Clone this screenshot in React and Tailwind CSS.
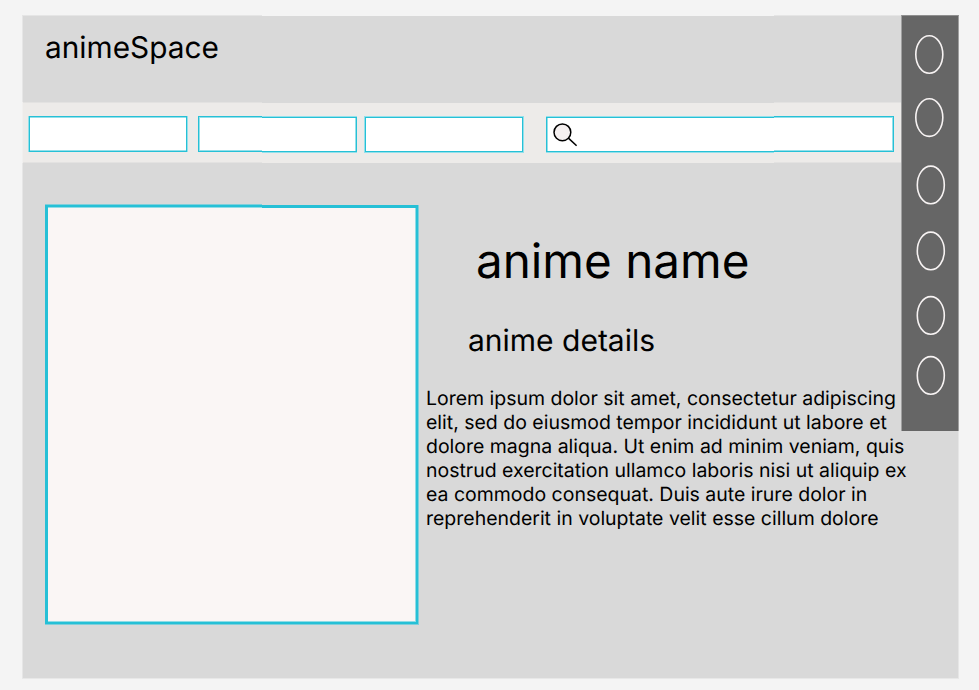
const circles = [
  { cx: 28.3, cy: 39.5 },
  { cx: 28.3, cy: 102.6 },
  { cx: 29.8, cy: 169.9 },
  { cx: 29.8, cy: 235.9 },
  { cx: 29.8, cy: 300.4 },
  { cx: 29.8, cy: 360.4 },
];

function SideRail() {
  return (
    <aside className="col-start-1 row-start-1 h-[416px] w-[58px] justify-self-end border-x border-t border-[#a0a0a0] border-t-[#8f8f8f] bg-[#666666]">
      <svg className="-ml-px -mt-px h-[416px] w-[58px]" viewBox="0 0 58 416" fill="none">
        {circles.map((c) => (
          <ellipse key={c.cy} cx={c.cx} cy={c.cy} rx="13.5" ry="18.8" stroke="#f7f3f3" strokeWidth="1.6" />
        ))}
      </svg>
    </aside>
  );
}

function SearchIcon() {
  return (
    <svg className="h-[26px] w-[26px]" viewBox="0 0 26 26" fill="none">
      <circle cx="9.4" cy="9.3" r="8.4" fill="#f5f0f0" stroke="#000" strokeWidth="1.5" />
      <path d="M15.4 15.1L23.6 22.7" stroke="#000" strokeWidth="1.5" />
    </svg>
  );
}

function Toolbar() {
  return (
    <div className="flex h-[61px] border-l border-l-[#f1f0ef] bg-[#edebe9]">
      <div className="flex w-[239px] border-y border-t-[#e3e2e1] border-b-[#e3e2e1]">
        <div className="ml-[5px] mt-[13px] h-9 w-40 border-x border-l-[#93e0ea] border-r-[#93e0ea]">
          <div className="h-9 border border-[#26c0d6]">
            <div className="h-[34px] border-y border-[#93e0ea] bg-white" />
          </div>
        </div>
        <div className="ml-[10px] mt-[13px] h-9 w-16 border-y border-l border-[#26c0d6]">
          <div className="h-[34px] border-y border-l border-[#93e0ea] bg-white" />
        </div>
      </div>
      <div className="flex w-[512px] border-t border-[#d9d9d9]">
        <div className="mt-[13px] h-[37px] w-[95px] border-y border-[#93e0ea]">
          <div className="h-[35px] border-y border-r border-[#26c0d6] bg-white">
            <div className="h-[33px] border-r border-[#93e0ea]" />
          </div>
        </div>
        <div className="ml-[7px] mt-[13px] h-[37px] w-40 border border-[#93e0ea]">
          <div className="h-[35px] border border-[#26c0d6] bg-white" />
        </div>
        <div className="ml-[22px] mt-[13px] h-[37px] w-[228px] border-y border-[#93e0ea]">
          <div className="h-[35px] border-y border-l border-[#26c0d6] bg-white">
            <div className="h-[33px] border-l border-[#93e0ea] pl-[5px] pt-[5px]">
              <SearchIcon />
            </div>
          </div>
        </div>
      </div>
      <div className="w-[127px] border-y border-[#e3e2e1]">
        <div className="mt-[13px] h-9 w-[120px] border-y border-r border-[#26c0d6]">
          <div className="h-[34px] border-y border-r border-[#93e0ea] bg-white" />
        </div>
      </div>
    </div>
  );
}

function Poster() {
  return (
    <div className="flex h-[421px] w-[374px] shrink-0">
      <div className="w-[217px] border-y border-[#7fcfdb]">
        <div className="h-[419px] border-b-2 border-l-[3px] border-t-2 border-[#26c0d6]">
          <div className="h-[415px] border-y border-[#90dce6] bg-[#faf6f5]" />
        </div>
      </div>
      <div className="mt-px h-[420px] w-[157px] border-b border-r border-[#7fcfdb]">
        <div className="h-[419px] border-b-2 border-r-2 border-t-[3px] border-[#26c0d6]">
          <div className="h-[414px] border-b border-r border-[#90dce6] bg-[#faf6f5]" />
        </div>
      </div>
    </div>
  );
}

export default function App() {
  return (
    <div className="h-[690px] w-[979px] overflow-hidden bg-[#f4f4f4] pl-[22px] pt-[15px] font-['Inter',sans-serif] text-black [text-rendering:geometricPrecision]">
      <div className="grid h-[664px] w-[937px]">
        <main className="col-start-1 row-start-1 bg-[#d9d9d9]">
          <div className="flex h-px">
            <div className="w-[240px] bg-[#e5e5e5]" />
            <div className="w-[512px] bg-[#f4f4f4]" />
            <div className="grow bg-[#e5e5e5]" />
          </div>
          <div className="h-[662px] border-x border-[#e6e6e6]">
            <header className="h-[86px] pl-[22px] pt-[13px]">
              <h1 className="whitespace-nowrap text-[29.8px] leading-[38px]">animeSpace</h1>
            </header>
            <div className="-ml-px w-[879px]">
              <Toolbar />
            </div>
            <section className="flex pl-[22px] pt-[41px]">
              <Poster />
              <div className="ml-[7px] w-[490px] whitespace-nowrap pt-[28px]">
                <h2 className="pl-[50px] text-[47.6px] leading-[60px]">anime name</h2>
                <h3 className="mt-[31px] pl-[42px] text-[30px] leading-[36px]">anime details</h3>
                <p className="mt-[27px] text-[19.48px] leading-[23.98px]">
                  Lorem ipsum dolor sit amet, consectetur adipiscing<br />
                  elit, sed do eiusmod tempor incididunt ut labore et<br />
                  dolore magna aliqua. Ut enim ad minim veniam, quis<br />
                  nostrud exercitation ullamco laboris nisi ut aliquip ex<br />
                  ea commodo consequat. Duis aute irure dolor in<br />
                  reprehenderit in voluptate velit esse cillum dolore
                </p>
              </div>
            </section>
          </div>
          <div className="h-px bg-[#e8e8e8]" />
        </main>
        <SideRail />
      </div>
    </div>
  );
}
